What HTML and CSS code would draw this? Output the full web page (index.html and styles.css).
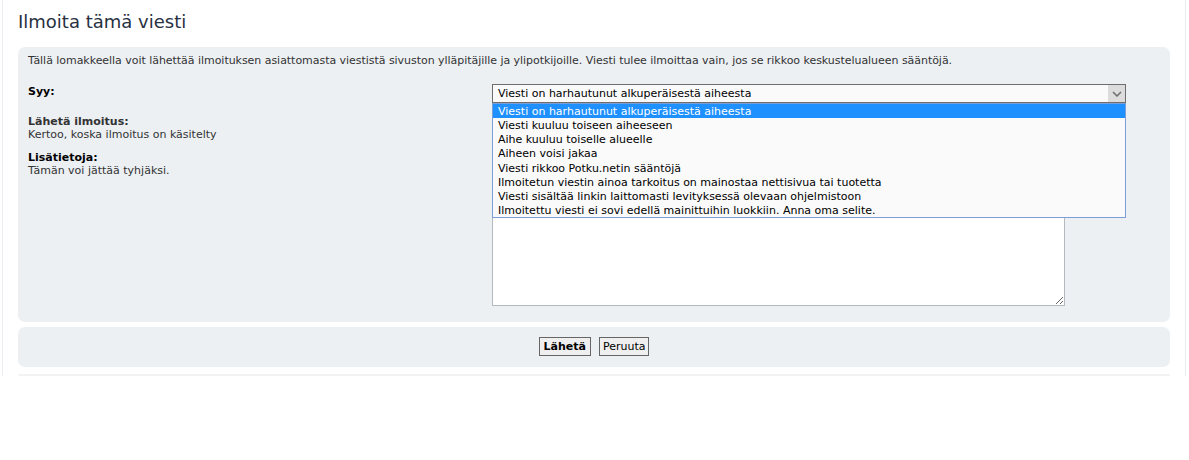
FILE: index.html
```html
<!DOCTYPE html>
<html lang="fi">
<head>
  <meta charset="UTF-8" />
  <title>Ilmoita tämä viesti</title>
  <meta name="viewport" content="width=device-width, initial-scale=1.0">
  <link rel="stylesheet" href="styles.css">
</head>
<body>

  <div class="wrap">
    <h2 class="page-title">Ilmoita tämä viesti</h2>

    <form class="report" onsubmit="return false">
      <div class="panel">
        <p class="intro">Tällä lomakkeella voit lähettää ilmoituksen asiattomasta viestistä sivuston ylläpitäjille ja ylipotkijoille. Viesti tulee ilmoittaa vain, jos se rikkoo keskustelualueen sääntöjä.</p>

        <div class="fields">
          <div class="label"><strong>Syy:</strong></div>
          <div class="input">
            <div class="select-box">
              <div class="select">
                <span class="select-value">Viesti on harhautunut alkuperäisestä aiheesta</span>
                <span class="select-arrow">
                  <svg width="10" height="6" viewBox="0 0 10 6"><path d="M1 1 L5 5 L9 1" fill="none" stroke="#6d6d6d" stroke-width="1.5"/></svg>
                </span>
              </div>
              <ul class="options">
                <li class="selected">Viesti on harhautunut alkuperäisestä aiheesta</li>
                <li>Viesti kuuluu toiseen aiheeseen</li>
                <li>Aihe kuuluu toiselle alueelle</li>
                <li>Aiheen voisi jakaa</li>
                <li>Viesti rikkoo Potku.netin sääntöjä</li>
                <li>Ilmoitetun viestin ainoa tarkoitus on mainostaa nettisivua tai tuotetta</li>
                <li>Viesti sisältää linkin laittomasti levityksessä olevaan ohjelmistoon</li>
                <li>Ilmoitettu viesti ei sovi edellä mainittuihin luokkiin. Anna oma selite.</li>
              </ul>
            </div>
          </div>

          <div class="label label-gap">
            <strong>Lähetä ilmoitus:</strong><br>
            <span>Kertoo, koska ilmoitus on käsitelty</span>
          </div>
          <div class="input label-gap">
            <input type="radio" name="notify" value="1" aria-label="Kyllä">
            <input type="radio" name="notify" value="0" aria-label="Ei" checked>
          </div>

          <div class="label">
            <strong>Lisätietoja:</strong><br>
            <span>Tämän voi jättää tyhjäksi.</span>
          </div>
          <div class="input">
            <textarea class="message" name="report_text"></textarea>
          </div>
        </div>
      </div>

      <div class="panel buttons">
        <button type="submit" class="btn btn-main">Lähetä</button>
        <button type="button" class="btn">Peruuta</button>
      </div>

      <div class="panel-edge"></div>
    </form>
  </div>

</body>
</html>
```

FILE: styles.css
```css
body {
  margin: 0;
  padding: 0;
  background: #fff;
  font-family: "DejaVu Sans", Verdana, sans-serif;
  font-size: 11px;
  color: #333;
}

.wrap {
  margin: 0 3px 0 2px;
  padding: 0 15px;
  border-left: 1px solid #e9edf1;
  border-right: 1px solid #e9edf1;
}

.page-title {
  margin: 0;
  padding: 11px 0 0 0;
  height: 47px;
  box-sizing: border-box;
  font-size: 18px;
  font-weight: normal;
  color: #28313f;
  line-height: 22px;
}

.panel {
  background: #ecf0f3;
  border-radius: 7px;
  padding: 7px 10px 0 10px;
  margin-bottom: 5px;
}

.intro {
  margin: 0;
  line-height: 13px;
  letter-spacing: -0.04px;
}

.fields {
  display: grid;
  grid-template-columns: 464px 1fr;
  margin-top: 18px;
}

.label {
  line-height: 13px;
  margin-bottom: 10px;
}

.label strong {
  color: #000;
}

.label-gap {
  margin-top: 2px;
}

.label.label-gap strong,
.label:last-of-type strong {
  color: #333;
}

.input {
  margin-bottom: 10px;
}

.select-box {
  position: relative;
  width: 634px;
  margin-top: -1px;
}

.select {
  display: flex;
  align-items: center;
  height: 19px;
  box-sizing: border-box;
  border: 1px solid #6e6e6e;
  background: #fafafa;
  color: #000;
  padding-left: 5px;
}

.select-value {
  flex: 1;
  white-space: nowrap;
}

.select-arrow {
  display: flex;
  align-items: center;
  justify-content: center;
  width: 17px;
  height: 17px;
  background: #dcdcdc;
}

/* the open list of reasons lies over the fields below */
.options {
  position: absolute;
  left: 0;
  right: 0;
  top: 19px;
  z-index: 2;
  margin: 0;
  padding: 0;
  list-style: none;
  background: #fafafa;
  border: 1px solid #7b9ed6;
  color: #000;
}

.options li {
  height: 14.125px;
  line-height: 15px;
  padding-left: 5px;
  white-space: nowrap;
}

.options li.selected {
  background: #1e90ff;
  color: #fff;
}

.message {
  display: block;
  width: 573px;
  height: 155px;
  box-sizing: border-box;
  margin: 0 0 6px 0;
  border: 1px solid #b4b9bf;
  background: #fff;
  font-family: inherit;
  font-size: 11px;
}

.buttons {
  display: flex;
  justify-content: center;
  gap: 8px;
  padding: 10px 10px 11px 10px;
}

.btn {
  height: 19px;
  padding: 0 3px;
  border: 1px solid #666;
  background: #efefef;
  font-family: inherit;
  font-size: 11px;
  color: #000;
  cursor: pointer;
}

.btn-main {
  font-weight: bold;
  padding: 0 4px;
}

.panel-edge {
  height: 2px;
  margin-top: 7px;
  background: #f1f3f5;
  border-radius: 7px 7px 0 0;
}
```
